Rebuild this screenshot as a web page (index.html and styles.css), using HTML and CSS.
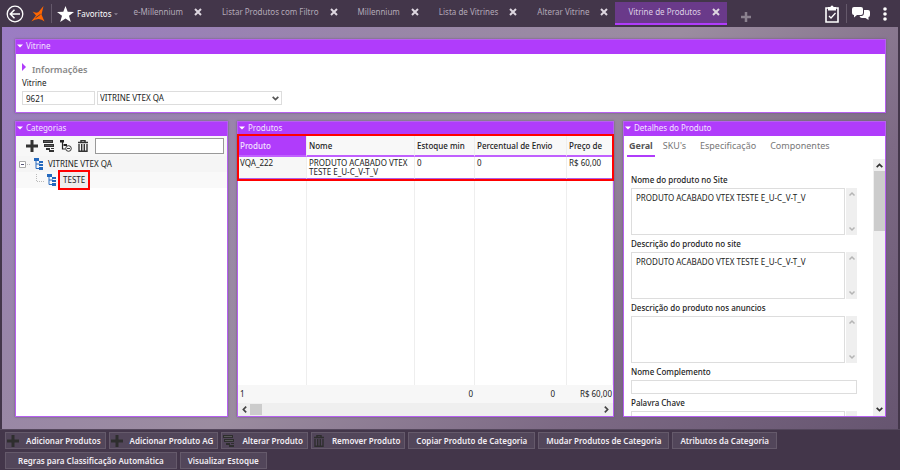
FILE: index.html
```html
<!DOCTYPE html>
<html lang="pt-BR">
<head>
<meta charset="utf-8">
<title>Vitrine de Produtos</title>
<link rel="stylesheet" href="styles.css">
</head>
<body>
<svg class="defs" aria-hidden="true">
  <symbol id="x" viewBox="0 0 8 8"><path d="M1 1l6 6M7 1L1 7" stroke="currentColor" stroke-width="2" fill="none"/></symbol>
  <symbol id="plus" viewBox="0 0 12 12"><path d="M6 0v12M0 6h12" stroke="currentColor" stroke-width="3" fill="none"/></symbol>
  <symbol id="edit" viewBox="0 0 12 12"><path d="M0 0h10v3H0zM1 4h10v3H1zM3 8h4v2H3zM8 8h3v1H8zM6 10h5v2H6z" fill="currentColor"/><path d="M1 1.500h8M2 5.500h8" stroke="#999" stroke-width=".4"/></symbol>
  <symbol id="trash" viewBox="0 0 12 12"><path d="M1 2.500h10M4 2V.5h4V2" stroke="currentColor" stroke-width="1.500" fill="none"/><path d="M2 4v7.300h8V4M4.700 4v7M7.300 4v7" stroke="currentColor" stroke-width="1.400" fill="none"/></symbol>
  <symbol id="tree" viewBox="0 0 10 12"><path d="M2 2v8.500h4M2 6h4M2 2h2" stroke="#2a6cc0" stroke-width="1" fill="none"/><path d="M0 0h5v3H0zM5 3h4v2H5zM5 6h4v2H5zM5 9h4v3H5z" fill="#2368bd"/></symbol>
  <symbol id="up" viewBox="0 0 8 8"><path d="M1.500 5.500L4 3l2.500 2.500" stroke="currentColor" stroke-width="1.500" fill="none"/></symbol>
  <symbol id="down" viewBox="0 0 8 8"><path d="M1.500 2.500L4 5l2.500-2.500" stroke="currentColor" stroke-width="1.500" fill="none"/></symbol>
  <symbol id="left" viewBox="0 0 8 8"><path d="M5.500 1.500L3 4l2.500 2.500" stroke="currentColor" stroke-width="1.500" fill="none"/></symbol>
  <symbol id="right" viewBox="0 0 8 8"><path d="M2.500 1.500L5 4L2.500 6.500" stroke="currentColor" stroke-width="1.500" fill="none"/></symbol>
  <symbol id="tri" viewBox="0 0 6 4"><path d="M0 .5h6L3 3.500z" fill="currentColor"/></symbol>
</svg>

<header class="topbar">
  <button class="back" aria-label="Voltar"><svg width="18" height="18" viewBox="0 0 18 18"><circle cx="9" cy="9" r="7.800" fill="none" stroke="#fff" stroke-width="1.300"/><path d="M14 9H4.500M8.500 4.800L4.300 9l4.200 4.200" fill="none" stroke="#fff" stroke-width="1.500"/></svg></button>
  <svg class="brand" width="14" height="16" viewBox="0 0 14 16"><path d="M12.500 0L10.500 8.500 13.500 15.500Q11 13 7.500 13 3.500 13 .3 15.500L5 9.500 1.500 5.500Q5 7.500 7.500 6z" fill="#f60"/><path d="M4.500 11.800l5-3.500" stroke="#43364a" stroke-width=".9"/></svg>
  <span class="sep"></span>
  <button class="favorites"><svg width="17" height="16" viewBox="0 0 17 16"><path d="M8.500 0l2.200 5.700 6.300.2-5 3.900 1.800 6.200-5.300-3.600L3.200 16 5 9.800 0 5.900l6.300-.2z" fill="#fff"/></svg><span>Favoritos</span><svg width="4" height="4" viewBox="0 0 6 4"><path d="M0 1h6L3 4z" fill="#8d8393"/></svg></button>
  <nav class="tabs">
    <div class="tab"><a href="#">e-Millennium</a><button aria-label="Fechar e-Millennium"><svg><use href="#x"/></svg></button></div>
    <div class="tab"><a href="#">Listar Produtos com Filtro</a><button aria-label="Fechar Listar Produtos"><svg><use href="#x"/></svg></button></div>
    <div class="tab"><a href="#">Millennium</a><button aria-label="Fechar Millennium"><svg><use href="#x"/></svg></button></div>
    <div class="tab"><a href="#">Lista de Vitrines</a><button aria-label="Fechar Lista de Vitrines"><svg><use href="#x"/></svg></button></div>
    <div class="tab"><a href="#">Alterar Vitrine</a><button aria-label="Fechar Alterar Vitrine"><svg><use href="#x"/></svg></button></div>
    <div class="tab active"><a href="#">Vitrine de Produtos</a><button aria-label="Fechar Vitrine de Produtos"><svg><use href="#x"/></svg></button></div>
    <button class="new-tab" aria-label="Nova aba"><svg><use href="#plus"/></svg></button>
  </nav>
  <div class="tools">
    <button aria-label="Tarefas"><svg width="14" height="18" viewBox="0 0 14 18"><path d="M1 3h12v14H1z" fill="none" stroke="#fff" stroke-width="1.600"/><path d="M3 2h2.500a1.500 1.500 0 0 1 3 0H11v3.500H3z" fill="#fff"/><path d="M4 11l2 2 4.500-5" fill="none" stroke="#fff" stroke-width="1.300"/></svg></button>
    <span class="sep"></span>
    <button aria-label="Mensagens"><svg width="18" height="13" viewBox="0 0 18 13"><path d="M2 0h7q2 0 2 2v4q0 2-2 2H5L2 10.500V8Q0 8 0 6V2Q0 0 2 0z" fill="#fff"/><path d="M12 3h4q2 0 2 2v3q0 2-1.500 2v3L13.500 11H10Q8 11 7.500 9H10q2-.5 2-3z" fill="#fff"/></svg></button>
    <button aria-label="Mais"><svg width="4" height="14" viewBox="0 0 4 14"><circle cx="2" cy="2" r="1.800" fill="#fff"/><circle cx="2" cy="7" r="1.800" fill="#fff"/><circle cx="2" cy="12" r="1.800" fill="#fff"/></svg></button>
  </div>
</header>

<main class="workspace">
  <section class="panel">
    <h2><svg><use href="#tri"/></svg>Vitrine</h2>
    <div class="vitrine">
      <button class="info"><svg width="4" height="8" viewBox="0 0 4 8"><path d="M0 0l4 4-4 4z" fill="#b03cfb"/></svg><span>Informações</span></button>
      <label for="code">Vitrine</label>
      <div class="fields">
        <input id="code" value="9621">
        <div class="combo"><select aria-label="Nome da vitrine"><option>VITRINE VTEX QA</option></select><svg class="combo-arrow"><use href="#down"/></svg></div>
      </div>
    </div>
  </section>

  <div class="columns">
    <section class="panel">
      <h2><svg><use href="#tri"/></svg>Categorias</h2>
      <div class="toolbar">
        <button aria-label="Adicionar"><svg><use href="#plus"/></svg></button>
        <button aria-label="Alterar"><svg><use href="#edit"/></svg></button>
        <button aria-label="Estrutura"><svg viewBox="0 0 12 12"><path d="M2.500 2v7h3M2.500 5h3" fill="none" stroke="#222" stroke-width="1.200"/><path d="M0 0h4v2.500H0zM4 4h3v2H4z" fill="#222"/><circle cx="8.500" cy="8.500" r="2.800" fill="#f7f7f7" stroke="#333"/><path d="M7 8.500h3" stroke="#333"/></svg></button>
        <button aria-label="Remover"><svg><use href="#trash"/></svg></button>
        <input aria-label="Pesquisar categorias">
      </div>
      <ul class="tree">
        <li><svg class="toggle" viewBox="0 0 12 8"><path d="M.5 1.500h6v6h-6z" fill="#fff" stroke="#aaa"/><path d="M2 4.500h3" stroke="#557"/><path d="M8 4.500h4" stroke="#bbb" stroke-dasharray="1 1"/></svg><svg class="node"><use href="#tree"/></svg><span>VITRINE VTEX QA</span></li>
        <li class="child"><svg class="elbow" viewBox="0 0 9 12"><path d="M.5 0v7.500H9" fill="none" stroke="#bbb" stroke-dasharray="1 1"/></svg><svg class="node"><use href="#tree"/></svg><span class="marked">TESTE</span></li>
      </ul>
    </section>

    <section class="panel products">
      <h2><svg><use href="#tri"/></svg>Produtos</h2>
      <div class="grid-area">
      <table>
        <colgroup><col class="c1"><col class="c2"><col class="c3"><col class="c4"><col class="c5"></colgroup>
        <thead><tr><th>Produto</th><th>Nome</th><th>Estoque min</th><th>Percentual de Envio</th><th>Preço de</th></tr></thead>
        <tbody>
          <tr class="item"><td>VQA_222</td><td>PRODUTO ACABADO VTEX TESTE E_U-C_V-T_V</td><td>0</td><td>0</td><td>R$ 60,00</td></tr>
          <tr class="space"><td></td><td></td><td></td><td></td><td></td></tr>
        </tbody>
        <tfoot><tr><td><span>1</span></td><td></td><td>0</td><td>0</td><td>R$ 60,00</td></tr></tfoot>
      </table>
      </div>
      <div class="hscroll"><svg><use href="#left"/></svg><span></span><svg><use href="#right"/></svg></div>
      <div class="highlight"></div>
    </section>

    <section class="panel">
      <h2><svg><use href="#tri"/></svg>Detalhes do Produto</h2>
      <nav class="detail-tabs"><a class="current" href="#">Geral</a><a href="#">SKU's</a><a href="#">Especificação</a><a href="#">Componentes</a></nav>
      <div class="detail">
        <form>
          <label for="f1">Nome do produto no Site</label>
          <div class="memo"><textarea id="f1">PRODUTO ACABADO VTEX TESTE E_U-C_V-T_V</textarea><span><svg><use href="#up"/></svg><svg><use href="#down"/></svg></span></div>
          <label for="f2">Descrição do produto no site</label>
          <div class="memo"><textarea id="f2">PRODUTO ACABADO VTEX TESTE E_U-C_V-T_V</textarea><span><svg><use href="#up"/></svg><svg><use href="#down"/></svg></span></div>
          <label for="f3">Descrição do produto nos anuncios</label>
          <div class="memo"><textarea id="f3"></textarea><span><svg><use href="#up"/></svg><svg><use href="#down"/></svg></span></div>
          <label for="f4">Nome Complemento</label>
          <input id="f4">
          <label for="f5">Palavra Chave</label>
          <div class="memo"><textarea id="f5"></textarea><span></span></div>
        </form>
        <div class="vscroll"><svg><use href="#up"/></svg><span></span><svg><use href="#down"/></svg></div>
      </div>
    </section>
  </div>
</main>

<footer class="actions">
  <div class="row">
    <button class="with-icon"><svg><use href="#plus"/></svg>Adicionar Produtos</button>
    <button class="with-icon"><svg><use href="#plus"/></svg>Adicionar Produto AG</button>
    <button class="with-icon"><svg><use href="#edit"/></svg>Alterar Produto</button>
    <button class="with-icon"><svg><use href="#trash"/></svg>Remover Produto</button>
    <button>Copiar Produto de Categoria</button>
    <button>Mudar Produtos de Categoria</button>
    <button>Atributos da Categoria</button>
  </div>
  <div class="row">
    <button class="wide">Regras para Classificação Automática</button>
    <button>Visualizar Estoque</button>
  </div>
</footer>
</body>
</html>
```
FILE: styles.css
```css
* { box-sizing: border-box; }
body {
  margin: 0;
  height: 100vh;
  display: flex;
  flex-direction: column;
  background: #43364a;
  color: #222;
  font: 8px/12px "Noto Sans", "Open Sans", sans-serif;
  overflow: hidden;
}
button, input, select, textarea { font: inherit; color: inherit; margin: 0; }
button { border: 0; padding: 0; background: none; display: flex; align-items: center; white-space: nowrap; }
a { color: inherit; text-decoration: none; }
svg { flex: none; display: block; }
.defs { position: absolute; width: 0; height: 0; }

.topbar { flex: none; height: 27px; display: flex; align-items: center; padding: 0 13px 0 6px; color: #fff; }
.brand { margin-left: 7px; }
.sep { width: 1px; height: 19px; background: #65596b; }
.topbar > .sep { margin: 0 5px 0 6px; }
.favorites { gap: 3px; }
.tabs { display: flex; align-self: stretch; margin-left: 2px; }
.tab { display: flex; align-items: center; gap: 11px; height: 23px; margin-top: 2px; padding: 0 7px 3px 13px; color: #b3a9b8; }
.tab svg { width: 8px; height: 8px; color: #ddd6e0; }
.tab.active { background: #6a3a8a; border-bottom: 2px solid #b03cfb; padding-bottom: 1px; color: #ddcfe6; }
.new-tab { margin: 6px 0 0 14px; color: #8a818e; }
.new-tab svg { width: 10px; height: 10px; }
.tools { margin-left: auto; display: flex; align-items: center; }
.tools .sep { margin: 0 5px 0 7px; }
.tools button:last-child { margin-left: 13px; }

.workspace {
  flex: 1;
  min-height: 0;
  margin: 0 2px;
  padding: 12px 12px 12px 13px;
  display: flex;
  flex-direction: column;
  gap: 8px;
  background: linear-gradient(140deg, #9b7cc4 0%, #9986a8 28%, #9b8ca0 50%, #7d6a85 75%, #665570 100%);
}
.panel { position: relative; min-width: 0; min-height: 0; display: flex; flex-direction: column; background: #fff; border: 1px solid #b660f0; box-shadow: 0 0 2px #6b587a; }
.panel h2 { flex: none; display: flex; align-items: center; gap: 3px; height: 14px; margin: 0; padding: 0 1px 2px; background: #b03cfb; color: #f3e4ff; font-size: 8px; font-weight: 400; line-height: 12px; }
.panel h2 svg { width: 6px; height: 4px; color: #fff; }
.vitrine { padding: 7px 7px 7px 6px; display: flex; flex-direction: column; align-items: flex-start; }
.info { gap: 6px; height: 16px; color: #888; font-size: 9px; font-weight: 600; }
.info span { padding-top: 2px; }
.info svg { margin-bottom: 4px; }
.vitrine label { height: 14px; }
.fields { display: flex; gap: 2px; }
.fields input, .combo select { height: 14px; border: 1px solid #ddd; background: #fff; outline: 0; padding: 0 3px; }
.fields input { width: 73px; }
.combo { position: relative; width: 185px; }
.combo select { width: 100%; appearance: none; padding: 0 2px; display: block; border-radius: 0; line-height: 12px; }
.combo-arrow { position: absolute; right: 2px; top: 3px; width: 9px; height: 9px; color: #555; }

.columns { flex: 1; min-height: 0; display: grid; grid-template-columns: 213fr 377fr 263fr; grid-template-rows: minmax(0, 1fr); column-gap: 9px; }
.toolbar { flex: none; display: flex; align-items: center; gap: 5px; height: 20px; padding: 0 3px 0 10px; background: #f7f7f7; color: #333; }
.toolbar svg { width: 12px; height: 12px; }
.toolbar input { flex: 1; min-width: 0; height: 16px; margin-left: 1px; border: 1px solid #999; outline: 0; }
.tree { list-style: none; margin: 0; padding: 0; }
.tree li { display: flex; align-items: center; height: 16px; padding-left: 3px; background: #f5f5f5; }
.tree .child { padding-left: 20px; background: #f9f9f9; }
.toggle { width: 12px; height: 8px; margin-right: 3px; }
.node { width: 10px; height: 12px; margin-right: 4px; }
.elbow { width: 9px; height: 12px; margin-right: 2px; }
.marked { border: 2px solid #f00; background: #eee; height: 20px; line-height: 16px; padding: 0 3px; margin-left: -3px; position: relative; }

.grid-area { flex: 1; min-height: 0; }
.products table { width: 100%; height: 100%; table-layout: fixed; border-collapse: separate; border-spacing: 0; }
.c1 { width: 69px; } .c2 { width: 108px; } .c3 { width: 60px; } .c4 { width: 92px; }
.products th, .products td { padding: 0 2px; border-right: 1px solid #eee; text-align: left; vertical-align: top; font-weight: 400; }
.products th { height: 21px; vertical-align: middle; background: #f8f8f8; border-bottom: 2px solid #c060ff; font-weight: 500; white-space: nowrap; }
.products th:first-child { background: #b03cfb; color: #f3e4ff; }
.products .item td { height: 22px; line-height: 9px; padding-top: 1px; border-bottom: 1px solid #b060e8; }
.products .item td:first-child { background: #f7f7f7; }
.products th:last-child, .products td:last-child { text-align: right; white-space: nowrap; padding-right: 1px; }
.products th:last-child, .products .item td:last-child { padding-right: 12px; }
.products tfoot td { height: 18px; border: 0; background: #f7f7f7; text-align: right; vertical-align: middle; }
.products tfoot td:first-child { text-align: left; }
.products tfoot td:nth-child(4) { padding-right: 12px; }
.hscroll { flex: none; display: flex; align-items: center; height: 13px; background: #efefef; padding: 0 2px; color: #444; }
.hscroll svg { width: 9px; height: 9px; }
.hscroll span { width: 12px; height: 11px; margin: 0 auto 0 1px; background: #ccc; }
.highlight { position: absolute; inset: 12px -1px auto -1px; height: 47px; border: 2px solid #f00; }

.detail-tabs { flex: none; display: flex; gap: 11px; height: 23px; padding-left: 3px; color: #777; font-size: 9px; }
.detail-tabs a { height: 21px; line-height: 19px; }
.detail-tabs a:nth-child(n+3) { margin-left: 3px; }
.detail-tabs .current { padding: 0 2px; margin-right: -3px; border-bottom: 2px solid #b03cfb; color: #555; font-weight: 700; }
.detail { flex: 1; min-height: 0; display: flex; overflow: hidden; }
.detail form { flex: 1; min-width: 0; padding: 15px 16px 0 7px; overflow: hidden; }
.detail label { display: block; height: 14px; font-weight: 500; }
.memo { display: flex; gap: 1px; height: 47px; margin-bottom: 3px; }
.memo textarea { flex: 1; min-width: 0; resize: none; border: 1px solid #ddd; outline: 0; padding: 3px 4px; overflow: hidden; white-space: nowrap; }
.memo span { width: 11px; background: #efefef; color: #b5b5b5; display: flex; flex-direction: column; align-items: center; justify-content: space-between; padding: 2px 0; }
.memo svg { width: 8px; height: 8px; }
.detail input { display: block; width: 100%; height: 14px; border: 1px solid #ddd; outline: 0; margin-bottom: 3px; }
.vscroll { flex: none; width: 12px; display: flex; flex-direction: column; align-items: center; background: #efefef; color: #333; padding: 2px 0; }
.vscroll svg { width: 9px; height: 9px; }
.vscroll span { width: 11px; height: 60px; margin: 1px 0 auto; background: #ccc; }

.actions { flex: none; display: flex; flex-direction: column; gap: 3px; padding: 2px 5px 1px; border-top: 1px solid #54475c; }
.row { display: flex; gap: 3px; }
.actions button { height: 17px; padding: 0 7px; border: 1px solid #655a6b; background: #52465a; color: #f2eef4; font-weight: 600; }
.actions .with-icon { padding: 0 4px 0 1px; gap: 7px; }
.actions svg { width: 12px; height: 12px; color: #2e2e2e; }
.actions .wide { padding: 0 12px; }
```
